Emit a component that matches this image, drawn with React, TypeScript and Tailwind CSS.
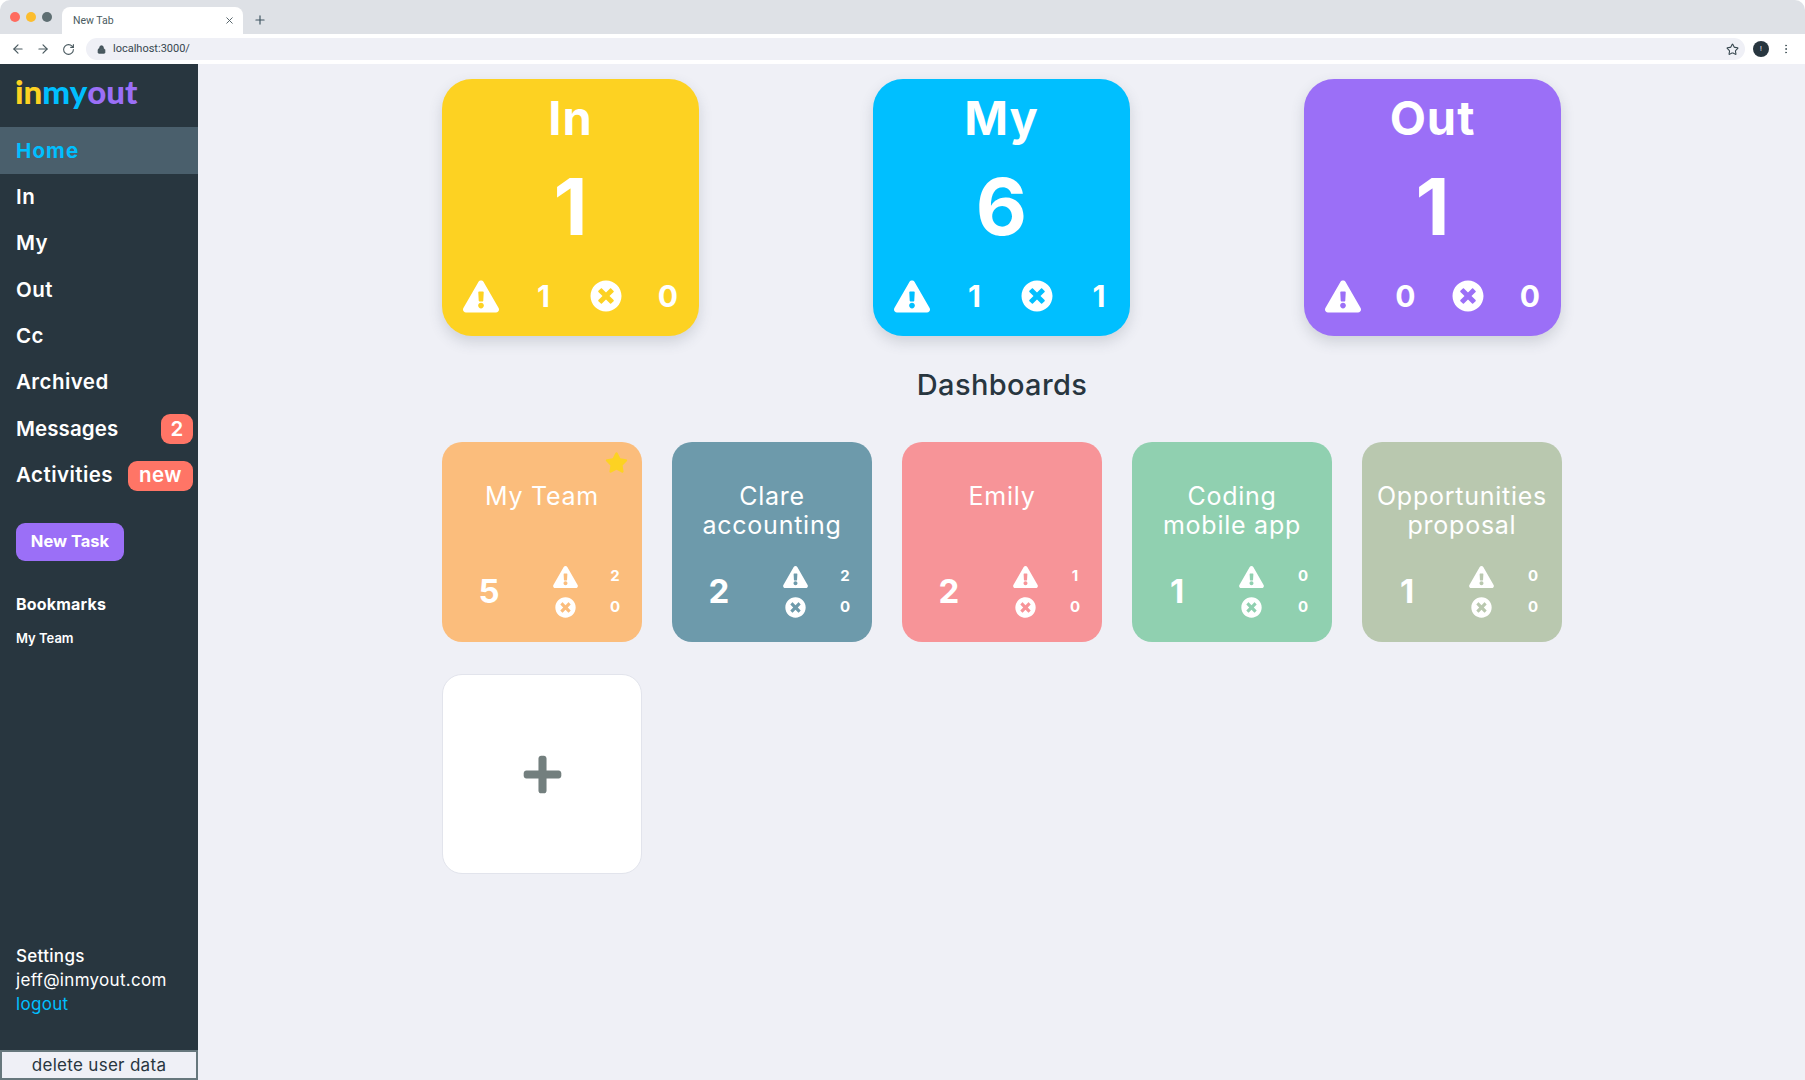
import { ArrowLeft, ArrowRight, RotateCw, Lock, Star, X, Plus, EllipsisVertical } from 'lucide-react';
import { FaExclamationTriangle, FaTimesCircle, FaStar, FaPlus } from 'react-icons/fa';

const navItems = ['In', 'My', 'Out', 'Cc', 'Archived'];

const summaries = [
  { title: 'In', total: 1, warn: 1, late: 0, bg: 'bg-[#fdd222]' },
  { title: 'My', total: 6, warn: 1, late: 1, bg: 'bg-[#00bfff]' },
  { title: 'Out', total: 1, warn: 0, late: 0, bg: 'bg-[#9b6ff7]' },
];

const dashboards = [
  { title: 'My Team', total: 5, warn: 2, late: 0, bg: 'bg-[#fbbd7c]', starred: true },
  { title: 'Clare accounting', total: 2, warn: 2, late: 0, bg: 'bg-[#6d9aab]' },
  { title: 'Emily', total: 2, warn: 1, late: 0, bg: 'bg-[#f79498]' },
  { title: 'Coding mobile app', total: 1, warn: 0, late: 0, bg: 'bg-[#90d0b0]' },
  { title: 'Opportunities proposal', total: 1, warn: 0, late: 0, bg: 'bg-[#b9c8af]' },
];

function BrowserBar() {
  return (
    <div className="flex flex-col bg-white font-['Roboto',sans-serif] text-[#4a5a60]">
      <div className="flex h-[34px] items-end rounded-t-[10px] bg-[#dee1e6]">
        <div className="mb-[12px] ml-[10px] flex gap-[6px]">
          <span className="h-[10px] w-[10px] rounded-full bg-[#ff6b5f]" />
          <span className="h-[10px] w-[10px] rounded-full bg-[#fcbd2e]" />
          <span className="h-[10px] w-[10px] rounded-full bg-[#5e6e72]" />
        </div>
        <div className="ml-[10px] flex h-[27px] w-[181px] items-center justify-between rounded-t-[8px] bg-white pl-[11px] pr-[8px] text-[10.5px]">
          New Tab
          <X className="h-[11px] w-[11px]" />
        </div>
        <Plus className="mb-[7px] ml-[10px] h-[14px] w-[14px] text-[#3f5560]" />
      </div>
      <div className="flex h-[30px] items-center">
        <ArrowLeft className="ml-[11px] h-[14px] w-[14px]" />
        <ArrowRight className="ml-[11px] h-[14px] w-[14px]" />
        <RotateCw className="ml-[12px] h-[13px] w-[13px]" />
        <div className="ml-[11px] flex h-[22px] w-[1659px] items-center rounded-full bg-[#eff0f6] pl-[11px] pr-[6px] text-[11px] text-[#37474f]">
          <Lock className="h-[9px] w-[9px] fill-[#4a5a60]" />
          <span className="ml-[7px] pt-[1px]">localhost:3000/</span>
          <Star className="ml-auto h-[13px] w-[13px]" />
        </div>
        <span className="ml-[8px] flex h-[16px] w-[16px] items-center justify-center rounded-full bg-[#28363f] text-[7px] text-white">
          !
        </span>
        <EllipsisVertical className="ml-[11px] h-[12px] w-[12px]" />
      </div>
    </div>
  );
}

function Sidebar() {
  return (
    <aside className="flex h-[1016px] w-[198px] shrink-0 flex-col bg-[#28363f] text-white">
      <div className="flex h-[63px] items-center pb-[9px] pl-[15px] font-['Lato',sans-serif] text-[33px] font-black leading-none">
        <span className="text-[#fdd222]">in</span>
        <span className="text-[#00bfff]">my</span>
        <span className="text-[#9b6ff7]">out</span>
      </div>
      <nav className="flex flex-col text-[20.5px] font-semibold tracking-[0.45px]">
        <div className="flex h-[47px] items-center bg-[#4a5f6c] pl-4 pt-[1px] font-bold tracking-[1.1px] text-[#00bfff]">
          Home
        </div>
        {navItems.map((item) => (
          <div key={item} className="flex h-[46.4px] items-center pl-4">
            {item}
          </div>
        ))}
        <div className="flex h-[46.4px] items-center justify-between pl-4 pr-[5px] tracking-[0.1px]">
          Messages
          <span className="flex h-[30px] w-[32px] items-center justify-center rounded-[9px] bg-[#ff7566]">2</span>
        </div>
        <div className="flex h-[46.4px] items-center justify-between pl-4 pr-[5px]">
          Activities
          <span className="flex h-[30px] w-[65px] items-center justify-center rounded-[9px] bg-[#ff7566]">new</span>
        </div>
      </nav>
      <button className="ml-4 mt-[24px] h-[38px] w-[108px] rounded-[9px] bg-[#9b6ff7] text-[16.5px] font-bold">
        New Task
      </button>
      <div className="ml-4 mt-[33px] text-[16px] font-bold leading-5 tracking-[0.2px]">Bookmarks</div>
      <div className="ml-4 mt-[16px] text-[13px] font-semibold leading-4">My Team</div>
      <div className="ml-4 mt-auto text-[17px] leading-6 tracking-[0.3px]">
        <div className="font-medium">Settings</div>
        <div>jeff@inmyout.com</div>
        <div className="text-[#00bfff]">logout</div>
      </div>
      <button className="mt-[34px] h-[30px] w-full border-2 border-[#66777c] bg-[#eff0f6] text-[17px] leading-none tracking-[0.3px] text-[#28363f]">
        delete user data
      </button>
    </aside>
  );
}

function SummaryCard({ title, total, warn, late, bg }: (typeof summaries)[number]) {
  return (
    <div className={`flex h-[257px] w-[257px] flex-col items-center rounded-[30px] text-white shadow-[0_6px_14px_rgba(60,70,90,0.18)] ${bg}`}>
      <div className="mt-[11px] text-[47px] font-bold leading-[56px] tracking-[1px]">{title}</div>
      <div className="mt-[12px] text-[79px] font-bold leading-[96px]">{total}</div>
      <div className="mt-auto mb-[22px] grid w-full grid-cols-4 justify-items-center pl-2 text-[30px] font-bold leading-9">
        <div className="flex items-center">
          <FaExclamationTriangle className="h-[33px] w-[36px]" />
        </div>
        <div>{warn}</div>
        <div className="flex items-center">
          <FaTimesCircle className="h-[32px] w-[32px]" />
        </div>
        <div>{late}</div>
      </div>
    </div>
  );
}

function DashboardCard({ title, total, warn, late, bg, starred }: (typeof dashboards)[number]) {
  return (
    <div className={`relative flex h-[200px] w-[200px] flex-col rounded-[20px] text-white ${bg}`}>
      {starred && <FaStar className="absolute right-[14px] top-[9px] h-[23px] w-[23px] text-[#fdd222]" />}
      <div className="mt-[40px] px-[14px] text-center text-[25px] leading-[29px] tracking-[0.75px]">{title}</div>
      <div
        className={`mt-auto mb-[19px] grid grid-rows-[31px_31px] items-center justify-items-center ${
          total === 1 ? 'grid-cols-[90px_58px_46px]' : 'grid-cols-[94px_58px_42px]'
        }`}
      >
        <div className="row-span-2 text-[33px] font-bold">{total}</div>
        <FaExclamationTriangle className="h-[22px] w-[25px]" />
        <div className="text-[15px] font-bold">{warn}</div>
        <FaTimesCircle className="h-[21px] w-[21px]" />
        <div className="text-[15px] font-bold">{late}</div>
      </div>
    </div>
  );
}

export default function App() {
  return (
    <div className="h-[1080px] w-[1805px] overflow-hidden bg-white font-['Inter',sans-serif]">
      <BrowserBar />
      <div className="flex">
        <Sidebar />
        <main className="flex h-[1016px] flex-1 justify-center bg-[#eff0f6] pl-[1px] pt-[15px]">
          <div className="flex w-[1120px] flex-col">
            <div className="flex justify-between pr-[1px]">
              {summaries.map((s) => (
                <SummaryCard key={s.title} {...s} />
              ))}
            </div>
            <h1 className="mt-[31px] text-center text-[29px] font-medium leading-9 tracking-[0.35px] text-[#28363f]">
              Dashboards
            </h1>
            <div className="mt-[39px] grid grid-cols-[repeat(5,200px)] justify-between gap-y-[32px]">
              {dashboards.map((d) => (
                <DashboardCard key={d.title} {...d} />
              ))}
              <div className="flex h-[200px] w-[200px] items-center justify-center rounded-[20px] border border-[#e2e4ec] bg-white">
                <FaPlus className="h-[43px] w-[43px] text-[#737f7e]" />
              </div>
            </div>
          </div>
        </main>
      </div>
    </div>
  );
}
